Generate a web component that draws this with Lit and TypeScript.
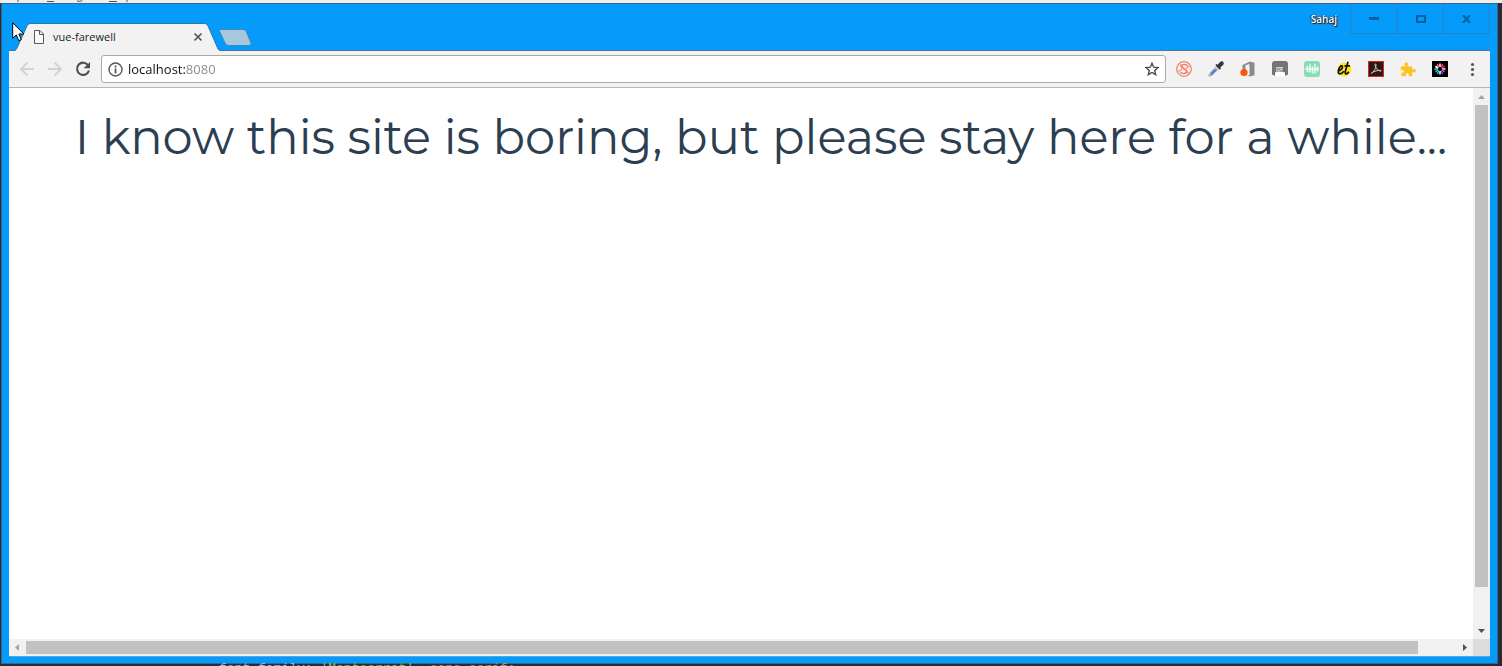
import { LitElement, html, css, svg } from "lit";
import { customElement, state } from "lit/decorators.js";

const petals = Array.from({ length: 12 }, (_, i) => i);
const petalColours = ["#fff", "#ff4d6d", "#f0256b", "#e8e8e8", "#c23bd6", "#7a4de0", "#fff", "#19c3e6", "#12b5d8", "#37d5ee", "#fff", "#ff5a7d"];

const extensions = [
  {
    label: "Blocker",
    art: svg`<g fill="none" stroke="#f58270"><circle cx="8" cy="8" r="7.300" stroke-width="1.300"/><path d="M11.800 4.600C9.700 2.900 5.500 3 5.200 5.200c-.3 2.600 5.600 2.500 5.600 5.200 0 2.200-3.900 2.700-6.600 1" stroke-width="1.500"/><path d="M4 3.500l9 9M2.500 10.500l3.500-2.300M10 7.500l3.500-2.500" stroke-width="1.100"/></g>`,
  },
  {
    label: "Colour picker",
    art: svg`<path d="M8.500 5.500l2.200 2.200-6.600 6.400-2.600 1.200-.7-.8 1.300-2.500z" fill="#c9d7ea" stroke="#7d8899" stroke-width=".7"/><path d="M6.300 8.600h3l-5 4.900-2 .9.900-2.600z" fill="#3f78cc"/><path d="M7.300 4.100l1.300-1 1 .7 2.200-2.500c1-1.200 2.800-1.300 3.500-.4.900 1 .6 2.500-.5 3.400l-2.500 2.100.7 1.200-1.200 1.200z" fill="#33373e"/>`,
  },
  {
    label: "Office",
    art: svg`<path d="M2.500 4L10 .5l4.500 1.300v12.400L10 15.600 7 14.500l2.500-.3V3L5.500 4.300v4L2.500 9z" fill="#8b8b8b"/><circle cx="4" cy="11.500" r="3.600" fill="#fb5607"/>`,
  },
  {
    label: "Reader",
    art: svg`<path d="M3 0h10a3 3 0 0 1 3 3v10.500l-3 1.500H3L0 13.500V3a3 3 0 0 1 3-3z" fill="#747474"/><path d="M4.500 6h6.500v5l2 .5v4H3v-4l1.500-.5z" fill="#fff"/><path d="M5 6.500h6V11H5z" fill="#a2a2a2"/><path d="M6 11l4-4" stroke="#ddd"/>`,
  },
  {
    label: "Audio",
    art: svg`<rect width="16" height="16" rx="3" fill="#8bdcb5"/><path d="M3.500 5v6M6 3.500v8M8.500 5.500v7M11 3v9.500M13.500 5.500v5" stroke="#e9fff4" stroke-width="1.500"/><path d="M1 8h14" stroke="#e9fff4" stroke-width="1.500"/>`,
  },
  {
    label: "Tracker",
    art: svg`<circle cx="8.500" cy="8.500" r="7" fill="#ffe81c"/><path d="M2 10C4.700 9.700 7 7.200 6.400 5.200 5.600 3.700 2.900 6 2.300 10c-.4 4 3 3.700 5.500.2M12 .8L9.300 10.500c-.7 3.300 1.700 3 3.500.2M8.500 4.800h5.500" fill="none" stroke="#111" stroke-width="1.700"/>`,
  },
  {
    label: "Acrobat",
    art: svg`<rect x=".5" y=".5" width="15" height="15" fill="#2d1818" stroke="#e32410"/><path d="M3.500 12.300c2.500-1.500 4.800-5.500 4.500-8.800-.1-1-1.300-.8-1 .4.700 3.300 2.800 5.500 5.400 6.300 1.200.3 1-.9-.2-.9-2.600 0-5.700.9-8.300 2.300-.9.500-.9 1-.4.700z" fill="none" stroke="#d2caca" stroke-width=".95"/>`,
  },
  {
    label: "Extension",
    art: svg`<path d="M1 5.500h4.300C4 3.500 4.600 1.500 6.300 1.500s2.400 2 1.200 4H12v3.100c2-1.100 3.700-.5 3.700 1s-1.800 2.200-3.700 1V15H8.700c.7-2-.2-2.900-1.400-2.900S5.200 13 6 15H1.500v-3.300c2 .5 2.700-.2 2.700-1.200S3 8.800 1 9z" fill="#fbc022" stroke="#ffd45b" stroke-width=".6"/>`,
  },
  {
    label: "Ring",
    art: svg`<rect width="16" height="16" fill="#000"/>${petals.map(
      (i) => svg`<path d="M8 2.500v3.500" stroke=${petalColours[i]} stroke-width="1.500" transform=${`rotate(${i * 30} 8 8)`}/>`
    )}`,
  },
];

@customElement("app-root")
export class AppRoot extends LitElement {
  @state() private address = "localhost:8080";

  static styles = css`
    :host {
      display: flex;
      flex-direction: column;
      position: relative;
      height: 100vh;
      overflow: hidden;
      background: #282b35;
      font-family: "Segoe UI", "Open Sans", sans-serif;
      font-size: 12px;
      color: #222;
    }
    * { box-sizing: border-box; }
    svg { display: block; }
    button {
      display: flex;
      align-items: center;
      justify-content: center;
      padding: 0;
      border: 0;
      background: none;
      font: inherit;
    }
    .behind-top { flex: none; height: 3px; background: #efefef; }
    .behind-bottom {
      flex: none;
      height: 2px;
      padding-left: 219px;
      font: 13px/10px "Liberation Mono", monospace;
      white-space: pre;
      color: #9cb4dc;
    }
    .str { color: #82b75c; }
    .val { color: #c88b5c; }
    .window {
      flex: 1;
      min-height: 0;
      display: flex;
      flex-direction: column;
      margin: 0 4px 0 1px;
      padding: 0 7px 6px;
      border: 1px solid #34658f;
      background: #049bfb;
    }
    .titlebar { flex: none; display: flex; height: 47px; align-items: flex-end; }
    .edge { height: 1px; background: #4b7592; }
    .edge.lead { width: 6px; }
    .edge.rest { flex: 1; }
    .tab {
      position: relative;
      display: flex;
      align-items: center;
      width: 204px;
      height: 28px;
      padding: 0 16px 0 19px;
    }
    .tab-shape { position: absolute; inset: 0; }
    .tab > :not(.tab-shape) { position: relative; }
    .tab-title { flex: 1; margin-left: 9px; font-size: 11px; line-height: 16px; }
    .strip { flex: 1; align-self: stretch; display: flex; flex-direction: column; }
    .strip-main { flex: 1; display: flex; align-items: flex-start; }
    .new-tab { align-self: flex-end; margin-bottom: 4px; }
    .user {
      margin: 7px 13px 0 auto;
      font-size: 10px;
      font-weight: 600;
      line-height: 16px;
      color: #fff;
      text-shadow: 0 0 1px #222, 1px 1px 1px #222, -1px 0 1px #335;
    }
    .controls { display: flex; border-left: 1px solid #2684c2; }
    .controls button {
      width: 46px;
      height: 30px;
      border: solid #2684c2;
      border-width: 0 1px 1px 0;
    }
    .controls button:first-child { width: 47px; }
    .toolbar {
      flex: none;
      display: flex;
      align-items: center;
      height: 37px;
      padding: 0 10px;
      background: #f2f2f2;
      border-bottom: 1px solid #b5b5b5;
    }
    .nav { display: flex; gap: 12px; margin-right: 10px; }
    .omnibox {
      flex: 1;
      display: flex;
      align-items: center;
      height: 28px;
      padding: 0 6px;
      border: 1px solid #a9a9a9;
      border-radius: 3px;
      background: #fff;
    }
    .omnibox input {
      flex: 1;
      min-width: 0;
      margin-left: 5px;
      padding: 0;
      border: 0;
      outline: 0;
      font: 13px/20px "Segoe UI", "Open Sans", sans-serif;
      color: transparent;
      background: linear-gradient(to right, #111 58px, #8a8a8a 58px);
      -webkit-background-clip: text;
      background-clip: text;
    }
    .extensions { display: flex; gap: 16px; margin-left: 10px; }
    .body {
      flex: 1;
      min-height: 0;
      display: grid;
      grid-template: 1fr 17px / 1fr 17px;
      background: #fff;
      border-bottom: 1px solid #5aa5d8;
    }
    .page { overflow: hidden; padding: 19px 0 0 40px; text-align: center; }
    h1 {
      margin: 0;
      font: 400 48px/60px Montserrat, Inter, sans-serif;
      color: #2c3e50;
      white-space: nowrap;
    }
    .bar { display: flex; align-items: center; background: #f1f1f1; }
    .bar.vertical { flex-direction: column; }
    .bar svg { flex: none; }
    .track { flex: 1; align-self: stretch; display: flex; }
    .vertical .track { flex-direction: column; padding: 0 2px 35px; }
    .horizontal .track { padding: 2px 38px 2px 0; }
    .thumb { flex: 1; background: #c1c1c1; }
    .corner { background: #dcdcdc; }
    .cursor { position: absolute; left: 12px; top: 22px; }
  `;

  private arrow(direction: "up" | "down" | "left" | "right") {
    const shapes = {
      up: "M5 11h7L8.500 7z",
      down: "M5 7h7l-3.500 4z",
      left: "M10 5v7L6 8.500z",
      right: "M7 5v7l4-3.500z",
    };
    const dim = direction === "up" || direction === "left";
    return html`<svg width="17" height="17" aria-hidden="true"><path d=${shapes[direction]} fill=${dim ? "#a3a3a3" : "#505050"} /></svg>`;
  }

  private onAddress(event: Event) {
    this.address = (event.target as HTMLInputElement).value;
  }

  render() {
    return html`
      <div class="behind-top">
        <svg width="160" height="3" aria-hidden="true">
          <path d="M18 0v2M47 1.500h7M82 0q0 2-5 1M109 1.500h8M127 0v2" fill="none" stroke="#555" />
        </svg>
      </div>
      <div class="window">
        <header class="titlebar">
          <span class="edge lead"></span>
          <div class="tab">
            <svg class="tab-shape" width="205" height="28" aria-hidden="true">
              <path d="M0 28L2 25 12 3Q13 .5 15 .5H190Q192 .5 193 3L203 26 205 28z" fill="#f2f2f2" />
              <path d="M0 27.500Q1 27 2 25L12 3Q13 .5 15 .5H190Q192 .5 193 3L203 26 205 27.500" fill="none" stroke="#2b78ad" />
            </svg>
            <svg width="10" height="14" aria-hidden="true">
              <path d="M.5.500h5.500l3.500 3.500v9.500h-9zM5.500.500v4h4" fill="#fafafa" stroke="#595959" />
            </svg>
            <span class="tab-title">vue-farewell</span>
            <button aria-label="Close tab">
              <svg width="10" height="10"><path d="M1.500 1.500l7 7M8.500 1.500l-7 7" stroke="#555" stroke-width="1.700" /></svg>
            </button>
          </div>
          <div class="strip">
            <div class="strip-main">
              <button class="new-tab" aria-label="New tab">
                <svg width="34" height="17">
                  <path d="M.500 2Q0 .500 2 .500H24Q26 .500 27 2L32 14Q32.500 16.500 30 16.500H9Q7 16.500 6 14z" fill="#a5c8de" stroke="#3f8ab9" />
                </svg>
              </button>
              <span class="user">Sahaj</span>
              <div class="controls">
                <button aria-label="Minimize"><svg width="10" height="3"><path d="M0 0h10v3H0z" fill="#07609f" /></svg></button>
                <button aria-label="Maximize"><svg width="10" height="8"><path d="M1 1h8v6H1z" fill="none" stroke="#07609f" stroke-width="2" /></svg></button>
                <button aria-label="Close"><svg width="9" height="8"><path d="M1 0l7 8M8 0L1 8" stroke="#07609f" stroke-width="2" /></svg></button>
              </div>
            </div>
            <span class="edge"></span>
          </div>
        </header>
        <div class="toolbar">
          <nav class="nav">
            <button aria-label="Back" disabled>
              <svg width="16" height="16"><path d="M15 8H2M8.500 1.500L2 8l6.500 6.500" fill="none" stroke="#d2d2d2" stroke-width="1.800" /></svg>
            </button>
            <button aria-label="Forward" disabled>
              <svg width="16" height="16"><path d="M1 8h13M7.500 1.500L14 8l-6.500 6.500" fill="none" stroke="#d2d2d2" stroke-width="1.800" /></svg>
            </button>
            <button aria-label="Reload">
              <svg width="16" height="16">
                <path d="M13.300 4.500A6.100 6.100 0 1 0 14 9.500" fill="none" stroke="#505050" stroke-width="2.100" />
                <path d="M15 1v6.300H8.700z" fill="#505050" />
              </svg>
            </button>
          </nav>
          <div class="omnibox">
            <button aria-label="Site information">
              <svg width="15" height="15">
                <circle cx="7.500" cy="7.500" r="6.500" fill="none" stroke="#555" stroke-width="1.400" />
                <path d="M7.500 6.500v5M7.500 3.500v2" stroke="#555" stroke-width="1.700" />
              </svg>
            </button>
            <input aria-label="Address" spellcheck="false" .value=${this.address} @input=${this.onAddress} />
            <button aria-label="Bookmark">
              <svg width="14" height="14">
                <path d="M7 1.200l1.700 4 4.300.4-3.300 2.800 1 4.300L7 10.500l-3.700 2.200 1-4.300L1 5.600l4.300-.4z" fill="none" stroke="#4c4c4c" stroke-width="1.400" />
              </svg>
            </button>
          </div>
          <div class="extensions">
            ${extensions.map((e) => html`<button aria-label=${e.label}><svg width="16" height="16">${e.art}</svg></button>`)}
            <button aria-label="Menu">
              <svg width="16" height="16"><g fill="#555"><circle cx="8.500" cy="3.500" r="1.600" /><circle cx="8.500" cy="8.500" r="1.600" /><circle cx="8.500" cy="13.500" r="1.600" /></g></svg>
            </button>
          </div>
        </div>
        <div class="body">
          <main class="page"><h1>I know this site is boring, but please stay here for a while...</h1></main>
          <div class="bar vertical">${this.arrow("up")}<div class="track"><div class="thumb"></div></div>${this.arrow("down")}</div>
          <div class="bar horizontal">${this.arrow("left")}<div class="track"><div class="thumb"></div></div>${this.arrow("right")}</div>
          <div class="corner"></div>
        </div>
      </div>
      <div class="behind-bottom">font-family: <span class="str">'Montserrat'</span>, <span class="val">sans-serif</span>;</div>
      <svg class="cursor" width="13" height="20" aria-hidden="true">
        <path d="M.700.800v15.500l3.600-3.300 2.500 5.700 2.500-1.100-2.400-5.600h5z" fill="#fff" stroke="#000" stroke-width="1" />
      </svg>
    `;
  }
}
